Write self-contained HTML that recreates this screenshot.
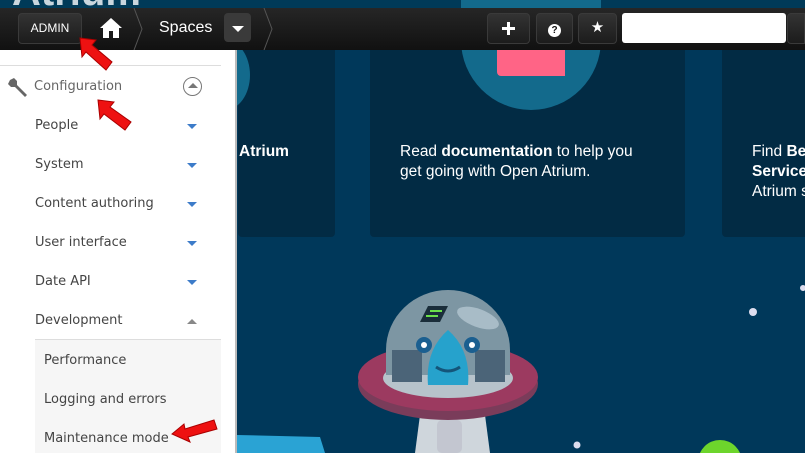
<!DOCTYPE html>
<html><head><meta charset="utf-8"><style>
*{margin:0;padding:0;box-sizing:border-box}
html,body{width:805px;height:453px;overflow:hidden}
body{background:#00385a;font-family:"Liberation Sans",sans-serif;position:relative}
.top{position:absolute;left:0;top:0;width:805px;height:8px;background:#003a58;overflow:hidden}
.nav{position:absolute;left:0;top:8px;width:805px;height:42px;background:linear-gradient(#262626,#111)}
.btn{position:absolute;top:5px;height:31px;background:linear-gradient(#333,#1c1c1c);border:1px solid #3a3a3a;border-radius:4px;color:#fff;text-align:center}
.side{position:absolute;left:0;top:50px;width:237px;height:403px;background:#fff;border-right:2px solid #bbb;overflow:hidden}
.it{position:absolute;left:35px;color:#444;font-family:"DejaVu Sans",sans-serif;font-size:13px}
.car{position:absolute;left:187px;width:0;height:0;border-left:5px solid transparent;border-right:5px solid transparent;border-top:5px solid #3d7cc9}
.card{position:absolute;top:40px;height:197px;background:#022b44;border-radius:4px;overflow:hidden}
.txt{position:absolute;color:#fff;font-size:15.5px;line-height:20px;white-space:nowrap}
</style></head><body>
<div class="top"><div style="position:absolute;left:12px;top:-30px;font-size:40px;font-weight:bold;color:#c9d6de">Atrium</div></div>
<div class="card" style="left:238px;width:97px"></div>
<div class="card" style="left:370px;width:315px"></div>
<div class="card" style="left:722px;width:83px;border-radius:4px 0 0 4px"><div class="txt" style="left:30px;top:102px">Find <b>Be</b><br><b>Service</b><br>Atrium s</div></div>
<div style="position:absolute;left:461px;top:0;width:140px;height:110px;border-radius:0 0 70px 70px;background:#136a8c"></div>
<div style="position:absolute;left:497px;top:40px;width:68px;height:36px;background:#ff6486;border-radius:0 0 0 4px"></div>
<div style="position:absolute;left:200px;top:40px;width:50px;height:70px;border-radius:50%;background:#136a8c"></div>
<div class="txt" style="left:239px;top:142px;font-weight:bold">Atrium</div>
<div class="txt" style="left:400px;top:142px">Read <b>documentation</b> to help you<br>get going with Open Atrium.</div>
<svg style="position:absolute;left:0;top:0" width="805" height="453">
<path d="M420 415 L485 415 L490 453 L415 453Z" fill="#cfd6dc"/>
<rect x="437" y="420" width="25" height="33" rx="5" fill="#c3c6d0"/>
<ellipse cx="448" cy="384" rx="90" ry="36" fill="#7a3c5a"/>
<ellipse cx="448" cy="377" rx="90" ry="34" fill="#9c3a60"/>
<ellipse cx="448" cy="378" rx="65" ry="20" fill="#b7c3cb"/>
<path d="M386 375 L386 350 A62 60 0 0 1 510 350 L510 375Z" fill="#7d96a3"/>
<ellipse cx="478" cy="318" rx="22" ry="9" fill="#a8bcc7" transform="rotate(20 478 318)"/>
<rect x="392" y="350" width="30" height="32" fill="#4b6478"/><rect x="475" y="350" width="30" height="32" fill="#4b6478"/>
<path d="M428 385 Q425 350 448 330 Q471 350 468 385Z" fill="#26a2cc"/>
<circle cx="424" cy="345" r="8" fill="#1b5f90"/><circle cx="424" cy="345" r="3" fill="#fff"/>
<circle cx="472" cy="345" r="8" fill="#1b5f90"/><circle cx="472" cy="345" r="3" fill="#fff"/>
<path d="M436 367 Q448 375 460 367" stroke="#14557a" stroke-width="3" fill="none"/>
<path d="M428 306 L448 306 L440 322 L420 322Z" fill="#1a2d3a"/>
<path d="M430 311h12M426 316h12" stroke="#6be04b" stroke-width="2"/>
<path d="M237 435 L320 437 L325 453 L237 453Z" fill="#2aa3d4"/>
<circle cx="720" cy="462" r="22" fill="#6dd52c"/>
<circle cx="753" cy="312" r="4" fill="#dde"/><circle cx="803" cy="288" r="3" fill="#dde"/><circle cx="577" cy="445" r="3.5" fill="#dde"/>
</svg>
<div class="nav">
<div class="btn" style="left:18px;width:64px;font-size:12px;line-height:29px">ADMIN</div>
<svg style="position:absolute;left:99px;top:9px" width="24" height="22" viewBox="0 0 24 22"><path d="M12 1 L23 11 L20 11 L20 21 L14 21 L14 14 L10 14 L10 21 L4 21 L4 11 L1 11Z" fill="#fff"/></svg>
<svg style="position:absolute;left:132px;top:0" width="12" height="42"><path d="M2 0 L10 21 L2 42" stroke="#555" fill="none"/></svg>
<div style="position:absolute;left:159px;top:11px;color:#fff;font-size:16px">Spaces</div>
<div class="btn" style="left:224px;width:27px;height:29px;top:5px;background:#3a3a3a"><div style="margin:12px auto 0;width:0;height:0;border-left:6px solid transparent;border-right:6px solid transparent;border-top:6px solid #fff"></div></div>
<svg style="position:absolute;left:262px;top:0" width="12" height="42"><path d="M2 0 L10 21 L2 42" stroke="#555" fill="none"/></svg>
<div class="btn" style="left:487px;width:43px"><svg width="41" height="29"><path d="M20.5 8v13M14 14.5h13" stroke="#fff" stroke-width="3"/></svg></div>
<div class="btn" style="left:536px;width:37px;font-size:13px;line-height:29px"><span style="display:inline-block;width:13px;height:13px;border-radius:50%;background:#fff;color:#111;font-size:10px;line-height:13px;font-weight:bold">?</span></div>
<div class="btn" style="left:578px;width:39px;font-size:15px;line-height:28px">★</div>
<div style="position:absolute;left:622px;top:5px;width:164px;height:30px;background:#fff;border-radius:3px"></div>
<div class="btn" style="left:787px;width:18px;border-radius:4px 0 0 4px"></div>
</div>
<div class="side">
<div style="position:absolute;left:0;top:15px;width:221px;border-top:1px solid #ddd"></div>
<svg style="position:absolute;left:7px;top:27px" width="22" height="22" viewBox="0 0 22 22"><path d="M3 3 L7 1 L10 4 L10 8 L20 18 L18 20 L8 10 L4 10 L1 7Z" fill="#666"/></svg>
<div class="it" style="top:29px;left:34px;color:#666">Configuration</div>
<div style="position:absolute;left:183px;top:27px;width:19px;height:19px;border:1px solid #777;border-radius:50%"><div style="margin:5px auto 0;width:0;height:0;border-left:5px solid transparent;border-right:5px solid transparent;border-bottom:5px solid #777"></div></div>
<div class="it" style="top:68px">People</div><div class="car" style="top:74px"></div>
<div class="it" style="top:107px">System</div><div class="car" style="top:113px"></div>
<div class="it" style="top:146px">Content authoring</div><div class="car" style="top:152px"></div>
<div class="it" style="top:185px">User interface</div><div class="car" style="top:191px"></div>
<div class="it" style="top:224px">Date API</div><div class="car" style="top:230px"></div>
<div class="it" style="top:263px">Development</div><div class="car" style="top:269px;border-top:0;border-bottom:5px solid #888"></div>
<div style="position:absolute;left:35px;top:289px;width:186px;height:114px;background:#f6f6f6;border-top:1px solid #ddd"></div>
<div class="it" style="top:303px;left:44px">Performance</div>
<div class="it" style="top:342px;left:44px">Logging and errors</div>
<div class="it" style="top:381px;left:44px">Maintenance mode</div>
</div>
<svg style="position:absolute;left:0;top:0" width="805" height="453">
<g fill="#ee1111" stroke="#a00" stroke-width="1">
<path d="M80 38 L96 40 L92 45 L112 62 L106 70 L86 52 L82 57Z"/>
<path d="M98 100 L114 102 L110 107 L131 122 L125 130 L104 114 L100 119Z"/>
<path d="M172 434 L184 424 L185 429 L214 420 L217 429 L188 437 L190 442Z"/>
</g></svg>
</body></html>
